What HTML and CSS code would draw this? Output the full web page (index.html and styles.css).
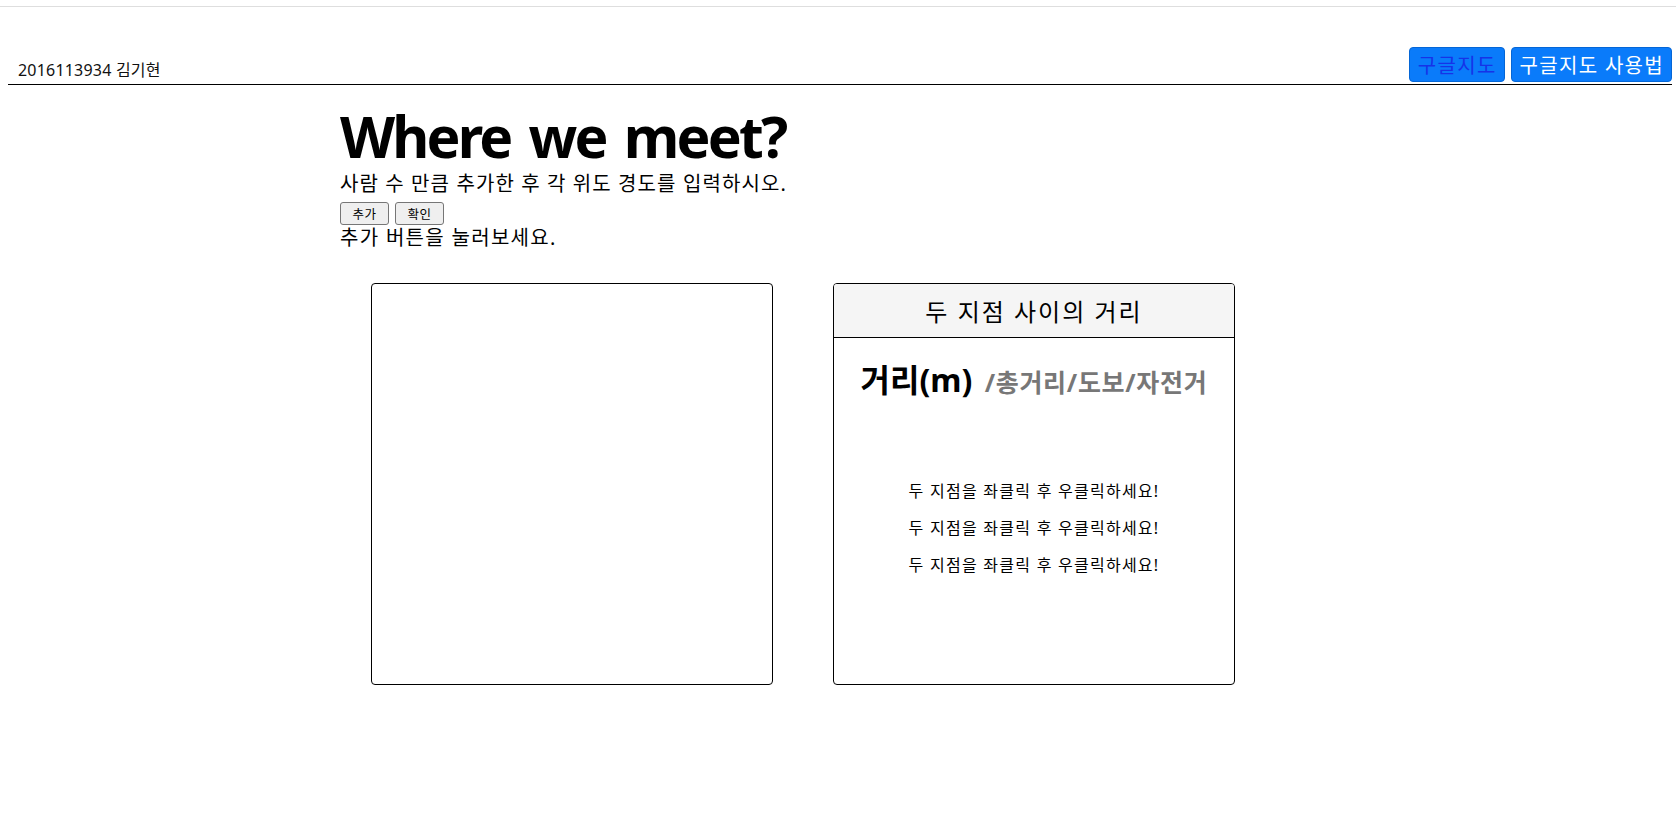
FILE: index.html
```html
<!DOCTYPE html>
<html lang="ko">
<head>
<meta charset="utf-8">
<title>Where we meet?</title>
<link rel="stylesheet" href="styles.css">
</head>
<body>
<div class="topline"></div>
<div class="page">
  <header class="topbar">
    <span class="student">2016113934 김기현</span>
    <nav class="links">
      <a class="btn btn-current" href="#">구글지도</a>
      <a class="btn" href="#">구글지도 사용법</a>
    </nav>
  </header>
  <main class="container">
    <h1 class="title">Where we meet?</h1>
    <p class="lead">사람 수 만큼 추가한 후 각 위도 경도를 입력하시오.</p>
    <div class="controls">
      <button class="small-btn" type="button">추가</button>
      <button class="small-btn" type="button">확인</button>
    </div>
    <p class="hint">추가 버튼을 눌러보세요.</p>
    <div class="panels">
      <div class="panel map"></div>
      <div class="panel dist">
        <div class="dist-head">두 지점 사이의 거리</div>
        <div class="dist-body">
          <h2 class="dist-title">거리(m) <small class="muted">/총거리/도보/자전거</small></h2>
          <p class="msg">두 지점을 좌클릭 후 우클릭하세요!</p>
          <p class="msg">두 지점을 좌클릭 후 우클릭하세요!</p>
          <p class="msg">두 지점을 좌클릭 후 우클릭하세요!</p>
        </div>
      </div>
    </div>
  </main>
</div>
</body>
</html>
```
FILE: styles.css
```css
html, body {
  margin: 0;
  padding: 0;
  background: #fff;
}
body {
  font-family: "Noto Sans", "Noto Sans CJK KR", sans-serif;
  color: #000;
}
.topline {
  margin-top: 6px;
  height: 1px;
  background: #dedede;
}
.page {
  padding: 0 4px 0 8px;
}
.topbar {
  margin-top: 40px;
  display: flex;
  justify-content: space-between;
  align-items: flex-end;
  border-bottom: 1px solid #000;
  padding-bottom: 2px;
}
.student {
  font-size: 16px;
  line-height: 20px;
  padding-left: 10px;
  padding-bottom: 2px;
  color: #111;
  letter-spacing: 0.2px;
}
.links {
  display: flex;
  gap: 6px;
}
.btn {
  display: inline-flex;
  align-items: center;
  height: 35px;
  box-sizing: border-box;
  padding: 0 7px 0 8px;
  font-size: 20px;
  letter-spacing: 1.3px;
  color: #fff;
  text-decoration: none;
  background: #0a7bfa;
  border: 1px solid #0566d6;
  border-radius: 4px;
}
.btn-current {
  color: #1633e8;
}
.container {
  width: 1000px;
  margin: 0 auto;
}
.title {
  margin: 17px 0 0;
  font-size: 57px;
  line-height: 68px;
  font-weight: 700;
  letter-spacing: -2.8px;
  word-spacing: 6px;
}
.lead {
  margin: 0;
  font-size: 20px;
  line-height: 28px;
  letter-spacing: 1.1px;
}
.controls {
  margin-top: 4px;
  display: flex;
  gap: 6px;
  height: 23px;
}
.small-btn {
  width: 49px;
  height: 23px;
  padding: 0;
  font-family: "Noto Sans CJK KR", sans-serif;
  font-size: 12.5px;
  letter-spacing: 0.6px;
  background: #efefef;
  border: 1px solid #767676;
  border-radius: 3px;
  color: #000;
}
.hint {
  margin: 0;
  font-size: 20px;
  line-height: 26px;
  letter-spacing: 1.3px;
}
.panels {
  margin-top: 32px;
  padding-left: 31px;
  display: flex;
  gap: 60px;
}
.panel {
  width: 400px;
  height: 400px;
  border: 1px solid #000;
  border-radius: 4px;
  overflow: hidden;
}
.dist-head {
  height: 53px;
  background: #f5f5f5;
  border-bottom: 1px solid #000;
  display: flex;
  align-items: center;
  justify-content: center;
  font-size: 24px;
  letter-spacing: 2px;
}
.dist-body {
  text-align: center;
}
.dist-title {
  margin: 22px 0 0;
  font-size: 32px;
  line-height: 40px;
  font-weight: 700;
}
.muted {
  font-size: 25px;
  color: #777;
  margin-left: 4px;
  letter-spacing: 0.7px;
}
.msg {
  margin: 16px 0 0;
  font-size: 16px;
  line-height: 21px;
  letter-spacing: 1.25px;
}
.dist-title + .msg {
  margin-top: 79px;
}
```
